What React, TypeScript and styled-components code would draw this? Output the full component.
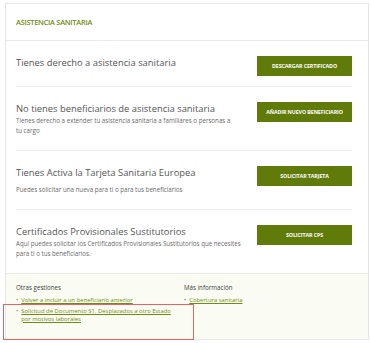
import styled, { createGlobalStyle } from "styled-components";

const GlobalStyle = createGlobalStyle`
  html, body {
    margin: 0;
    padding: 0;
    background: #ffffff;
  }
  body {
    font-family: "Open Sans", "Liberation Sans", sans-serif;
  }
`;

const Page = styled.div`
  position: relative;
  width: 370px;
  height: 343px;
  overflow: hidden;
`;

const Card = styled.div`
  margin: 3px 0 0 5px;
  width: 364px;
  box-sizing: border-box;
  border: 1px solid #e7e7e7;
  background: #ffffff;
  position: relative;
`;

const Header = styled.div`
  height: 36px;
  display: flex;
  align-items: center;
  padding-left: 10px;
  border-bottom: 1px solid #ebebeb;
`;

const HeaderTitle = styled.h2`
  margin: 0;
  font-size: 7.4px;
  font-weight: 600;
  letter-spacing: -0.25px;
  color: #6e8c0f;
  text-transform: uppercase;
`;

const Sections = styled.div`
  padding: 0 16px 0 10px;
`;

const Section = styled.div`
  display: flex;
  justify-content: space-between;
  align-items: flex-start;
  padding: 15px 0 10px;
  border-bottom: 1px solid #ededed;

  &:last-child {
    border-bottom: none;
  }
`;

const TextCol = styled.div`
  flex: 1;
  min-width: 0;
  padding-right: 12px;
`;

const Title = styled.div`
  font-size: 9.4px;
  line-height: 13px;
  color: #565656;
`;

const Desc = styled.div<{ $spaced?: boolean }>`
  font-size: 6.2px;
  line-height: 10px;
  color: #6a6a6a;
  margin-top: ${(p) => (p.$spaced ? "6px" : "1px")};
  margin-bottom: 4px;
  max-width: 226px;
`;

const ActionButton = styled.button`
  flex: none;
  width: 95px;
  height: 20px;
  border: none;
  background: #617b0b;
  color: #ffffff;
  font-family: "Open Sans", "Liberation Sans", sans-serif;
  font-weight: 700;
  font-size: 5.3px;
  letter-spacing: -0.1px;
  text-transform: uppercase;
  padding: 0;
  cursor: pointer;
`;

const Footer = styled.div`
  position: relative;
  border-top: 1px solid #e9ebe2;
  background: #fafcf4;
  padding: 9px 10px 12px;
  display: grid;
  grid-template-columns: 168px 1fr;
`;

const FooterCol = styled.div``;

const FooterHeading = styled.div`
  font-size: 6.2px;
  line-height: 10px;
  color: #3c3c3c;
`;

const LinkList = styled.ul`
  list-style: none;
  margin: 4px 0 0;
  padding: 0;
`;

const LinkItem = styled.li`
  display: flex;
  gap: 3px;
  max-width: 158px;
  font-size: 5.9px;
  line-height: 7.6px;
  margin-bottom: 3.4px;
`;

const Bullet = styled.span`
  color: #6e8c0f;
  flex: none;
`;

const FooterLink = styled.a`
  color: #6e8c0f;
  text-decoration: underline;
`;

const Highlight = styled.div`
  position: absolute;
  left: -3px;
  top: 30px;
  width: 191px;
  height: 36px;
  box-sizing: border-box;
  border: 1.5px solid #e26464;
  pointer-events: none;
`;

type Item = {
  title: string;
  desc?: string;
  action: string;
  spaced?: boolean;
};

const items: Item[] = [
  { title: "Tienes derecho a asistencia sanitaria", action: "Descargar certificado" },
  {
    title: "No tienes beneficiarios de asistencia sanitaria",
    desc: "Tienes derecho a extender tu asistencia sanitaria a familiares o personas a tu\u00a0cargo",
    action: "Añadir nuevo beneficiario",
  },
  {
    title: "Tienes Activa la Tarjeta Sanitaria Europea",
    desc: "Puedes solicitar una nueva para ti o para tus beneficiarios",
    action: "Solicitar tarjeta",
    spaced: true,
  },
  {
    title: "Certificados Provisionales Sustitutorios",
    desc: "Aquí puedes solicitar los Certificados Provisionales Sustitutorios que necesites para ti o tus beneficiarios.",
    action: "Solicitar CPS",
  },
];

export default function App() {
  return (
    <Page>
      <GlobalStyle />
      <Card>
        <Header>
          <HeaderTitle>Asistencia Sanitaria</HeaderTitle>
        </Header>
        <Sections>
          {items.map((it) => (
            <Section key={it.title}>
              <TextCol>
                <Title>{it.title}</Title>
                {it.desc && <Desc $spaced={it.spaced}>{it.desc}</Desc>}
              </TextCol>
              <ActionButton>{it.action}</ActionButton>
            </Section>
          ))}
        </Sections>
        <Footer>
          <FooterCol>
            <FooterHeading>Otras gestiones</FooterHeading>
            <LinkList>
              <LinkItem>
                <Bullet>•</Bullet>
                <FooterLink href="#">Volver a incluir a un beneficiario anterior</FooterLink>
              </LinkItem>
              <LinkItem>
                <Bullet>•</Bullet>
                <FooterLink href="#">
                  Solicitud de Documento S1. Desplazados a otro Estado por motivos laborales
                </FooterLink>
              </LinkItem>
            </LinkList>
          </FooterCol>
          <FooterCol>
            <FooterHeading>Más información</FooterHeading>
            <LinkList>
              <LinkItem>
                <Bullet>•</Bullet>
                <FooterLink href="#">Cobertura sanitaria</FooterLink>
              </LinkItem>
            </LinkList>
          </FooterCol>
          <Highlight />
        </Footer>
      </Card>
    </Page>
  );
}
